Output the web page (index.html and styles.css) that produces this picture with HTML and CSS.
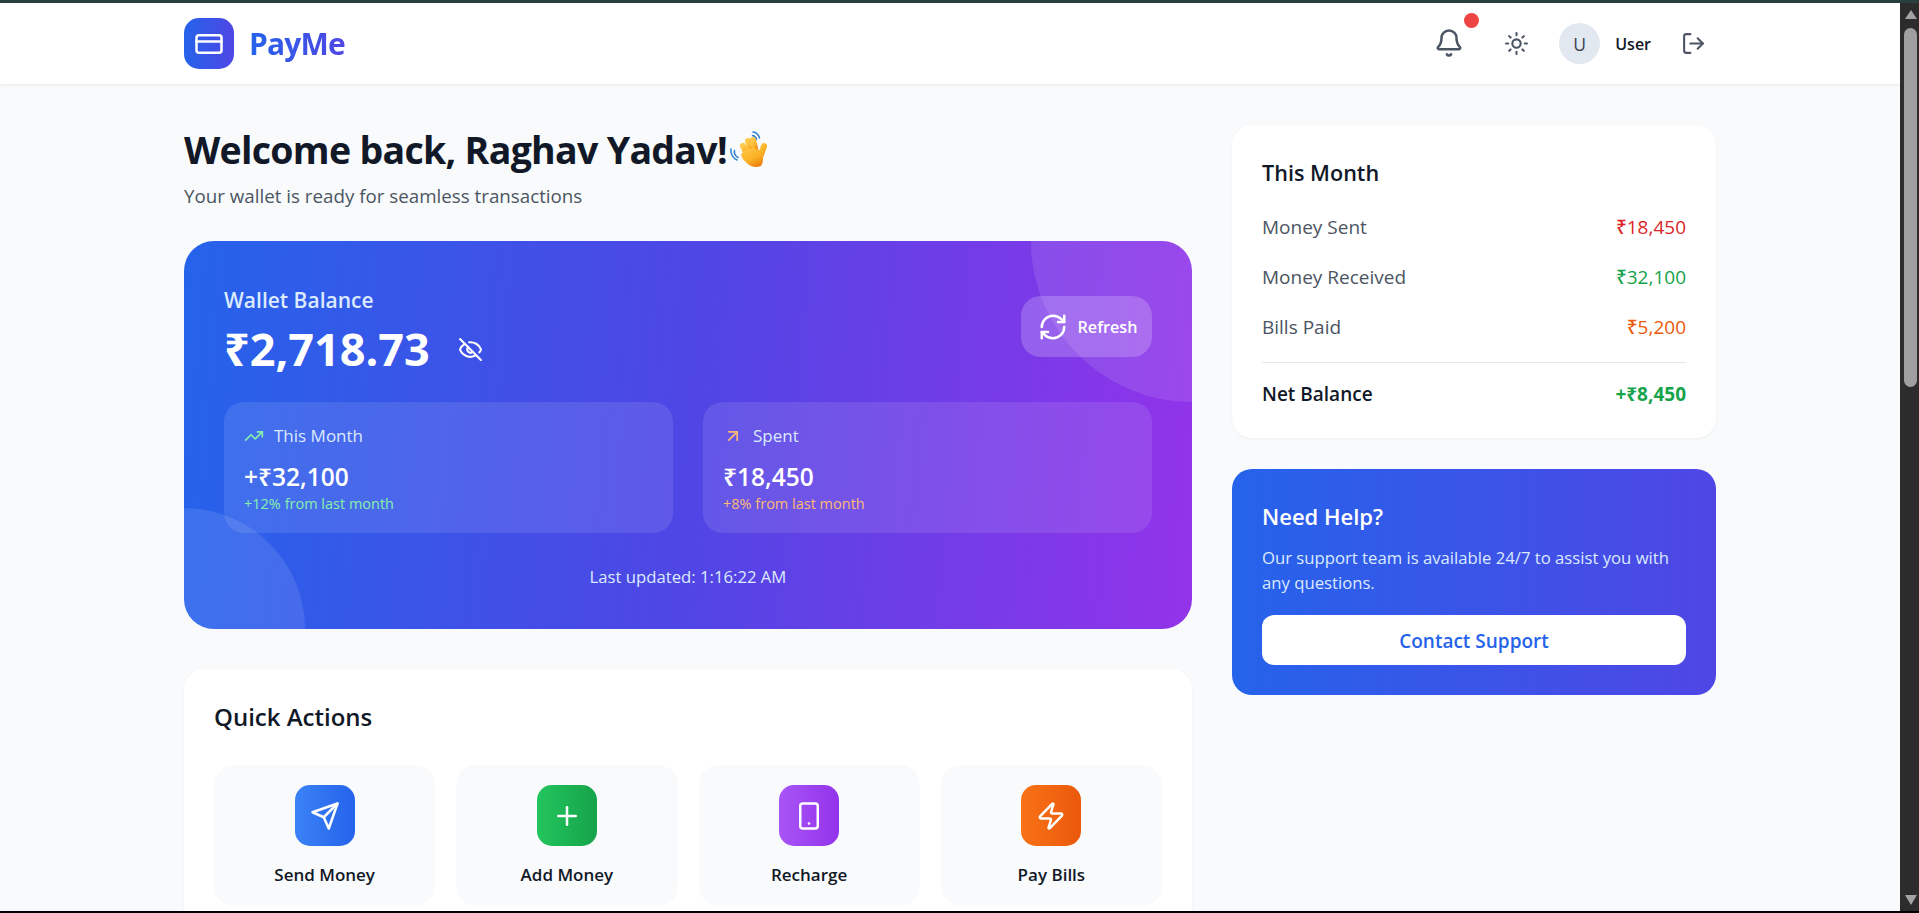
FILE: index.html
```html
<!DOCTYPE html>
<html lang="en">
<head>
  <meta charset="UTF-8" />
  <title>PayMe</title>
  <link rel="stylesheet" href="styles.css">
</head>
<body>
  <div class="top-edge"></div>
  <div class="frame">
    <div class="page">
      <header class="header">
        <div class="brand">
          <div class="brand-icon">
            <svg class="ico ico-30" viewBox="0 0 24 24"><rect x="2" y="5" width="20" height="14" rx="2"/><path d="M2 10h20"/></svg>
          </div>
          <span class="brand-name">PayMe</span>
        </div>
        <div class="header-tools">
          <button class="tool tool-bell">
            <svg class="ico ico-30" viewBox="0 0 24 24"><path d="M10.268 21a2 2 0 0 0 3.464 0"/><path d="M3.262 15.326A1 1 0 0 0 4 17h16a1 1 0 0 0 .74-1.673C19.41 13.956 18 12.499 18 8A6 6 0 0 0 6 8c0 4.499-1.411 5.956-2.738 7.326"/></svg>
            <span class="dot"></span>
          </button>
          <button class="tool">
            <svg class="ico ico-25" viewBox="0 0 24 24"><circle cx="12" cy="12" r="4"/><path d="M12 2v2M12 20v2M4.930 4.930l1.410 1.410M17.660 17.660l1.410 1.410M2 12h2M20 12h2M6.340 17.660l-1.410 1.410M19.070 4.930l-1.410 1.410"/></svg>
          </button>
          <div class="user">
            <span class="avatar">U</span>
            <span class="user-name">User</span>
          </div>
          <button class="tool">
            <svg class="ico ico-25" viewBox="0 0 24 24"><path d="M9 21H5a2 2 0 0 1-2-2V5a2 2 0 0 1 2-2h4"/><path d="M16 17l5-5-5-5"/><path d="M21 12H9"/></svg>
          </button>
        </div>
      </header>

      <main class="content">
        <section class="col-main">
          <h1 class="welcome">Welcome back, Raghav Yadav!
            <svg class="wave" viewBox="728 131 40 38">
              <defs>
                <linearGradient id="hand" x1="0" y1="0" x2="0.6" y2="1">
                  <stop offset="0" stop-color="#ffc94a"/>
                  <stop offset="0.65" stop-color="#fbb024"/>
                  <stop offset="1" stop-color="#ee8512"/>
                </linearGradient>
              </defs>
              <g fill="none" stroke="#2f7fd0" stroke-width="1.500" stroke-linecap="round">
                <path d="M752 132c3 .3 5.500 2.800 6.500 6"/>
                <path d="M751.500 135.500c2 .3 3.500 1.800 4 4"/>
                <path d="M730 149c-.8 4 1.500 9 6 11"/>
                <path d="M733.500 150.500c-.5 2.500 1 5.500 3.500 7"/>
              </g>
              <g stroke="url(#hand)" stroke-width="6" stroke-linecap="round">
                <path d="M747 156l-5-10"/>
                <path d="M751 153l-4-12"/>
                <path d="M755 153l-3-13"/>
                <path d="M758 160l5-14"/>
              </g>
              <path d="M740 155c2-5 12-9 18-5 5 4 5 12 2 16-4 2-10 1-13-2-3-3-6-5-7-9z" fill="url(#hand)"/>
            </svg>
          </h1>
          <p class="welcome-sub">Your wallet is ready for seamless transactions</p>

          <div class="balance-card">
            <span class="blob blob-top"></span>
            <span class="blob blob-bottom"></span>
            <div class="balance-head">
              <div>
                <div class="balance-label">Wallet Balance</div>
                <div class="balance-row">
                  <span class="balance-amount">₹2,718.73</span>
                  <svg class="ico ico-25 eye" viewBox="0 0 24 24"><path d="M10.733 5.076a10.744 10.744 0 0 1 11.205 6.575 1 1 0 0 1 0 .696 10.747 10.747 0 0 1-1.444 2.490"/><path d="M14.084 14.158a3 3 0 0 1-4.242-4.242"/><path d="M17.479 17.499a10.750 10.750 0 0 1-15.417-5.151 1 1 0 0 1 0-.696 10.750 10.750 0 0 1 4.446-5.143"/><path d="M2 2l20 20"/></svg>
                </div>
              </div>
              <button class="refresh">
                <svg class="ico ico-30" viewBox="0 0 24 24"><path d="M3 12a9 9 0 0 1 9-9 9.750 9.750 0 0 1 6.740 2.740L21 8"/><path d="M21 3v5h-5"/><path d="M21 12a9 9 0 0 1-9 9 9.750 9.750 0 0 1-6.740-2.740L3 16"/><path d="M8 16H3v5"/></svg>
                Refresh
              </button>
            </div>
            <div class="stat-grid">
              <div class="stat">
                <div class="stat-label">
                  <svg class="ico ico-20 green" viewBox="0 0 24 24"><path d="M22 7l-8.500 8.500-5-5L2 17"/><path d="M16 7h6v6"/></svg>
                  This Month
                </div>
                <div class="stat-value">+₹32,100</div>
                <div class="stat-note green">+12% from last month</div>
              </div>
              <div class="stat">
                <div class="stat-label">
                  <svg class="ico ico-20 peach" viewBox="0 0 24 24"><path d="M7 7h10v10"/><path d="M7 17L17 7"/></svg>
                  Spent
                </div>
                <div class="stat-value">₹18,450</div>
                <div class="stat-note peach">+8% from last month</div>
              </div>
            </div>
            <div class="updated">Last updated: 1:16:22 AM</div>
          </div>

          <div class="panel quick">
            <h2 class="panel-title">Quick Actions</h2>
            <div class="quick-grid">
              <div class="quick-tile">
                <div class="quick-icon bg-blue">
                  <svg class="ico ico-30" viewBox="0 0 24 24"><path d="M22 2l-7 20-4-9-9-4z"/><path d="M22 2L11 13"/></svg>
                </div>
                <span>Send Money</span>
              </div>
              <div class="quick-tile">
                <div class="quick-icon bg-green">
                  <svg class="ico ico-30" viewBox="0 0 24 24"><path d="M5 12h14"/><path d="M12 5v14"/></svg>
                </div>
                <span>Add Money</span>
              </div>
              <div class="quick-tile">
                <div class="quick-icon bg-purple">
                  <svg class="ico ico-30" viewBox="0 0 24 24"><rect x="5" y="2" width="14" height="20" rx="2"/><path d="M12 18h.01"/></svg>
                </div>
                <span>Recharge</span>
              </div>
              <div class="quick-tile">
                <div class="quick-icon bg-orange">
                  <svg class="ico ico-30" viewBox="0 0 24 24"><path d="M4 14a1 1 0 0 1-.78-1.630l9.900-10.200a.5.5 0 0 1 .86.46l-1.920 6.020A1 1 0 0 0 13 10h7a1 1 0 0 1 .78 1.630l-9.900 10.200a.5.5 0 0 1-.86-.46l1.920-6.020A1 1 0 0 0 11 14z"/></svg>
                </div>
                <span>Pay Bills</span>
              </div>
            </div>
          </div>
        </section>

        <aside class="col-side">
          <div class="panel summary">
            <h2 class="panel-title">This Month</h2>
            <div class="summary-row"><span>Money Sent</span><span class="val red">₹18,450</span></div>
            <div class="summary-row"><span>Money Received</span><span class="val grn">₹32,100</span></div>
            <div class="summary-row"><span>Bills Paid</span><span class="val org">₹5,200</span></div>
            <div class="summary-row summary-net"><span>Net Balance</span><span class="val grn">+₹8,450</span></div>
          </div>
          <div class="help">
            <h3 class="help-title">Need Help?</h3>
            <p class="help-text">Our support team is available 24/7 to assist you with any questions.</p>
            <button class="help-btn">Contact Support</button>
          </div>
        </aside>
      </main>
    </div>
    <div class="scrollbar">
      <span class="arrow arrow-up"></span>
      <span class="thumb"></span>
      <span class="arrow arrow-down"></span>
    </div>
  </div>
  <div class="bottom-edge"></div>
</body>
</html>
```

FILE: styles.css
```css
* {
  box-sizing: border-box;
}
html, body {
  margin: 0;
  height: 913px;
  overflow: hidden;
  font-family: "Open Sans", "Noto Sans", sans-serif;
  background: #f9fafb;
  color: #111827;
}
button {
  font-family: inherit;
  border: none;
  background: none;
  cursor: pointer;
}
h1, h2, h3, p {
  margin: 0;
}

.top-edge {
  height: 3px;
  background: #2a3f3d;
}
.bottom-edge {
  height: 2px;
  background: #000;
}
.frame {
  display: flex;
  height: 908px;
}
.page {
  flex: 1;
  min-width: 0;
  overflow: hidden;
}

/* fake browser scrollbar */
.scrollbar {
  width: 19px;
  background: #2c2c2c;
  display: flex;
  flex-direction: column;
  align-items: center;
  padding: 7px 0 6px 2px;
}
.arrow {
  width: 0;
  height: 0;
  border-left: 6.5px solid transparent;
  border-right: 6.5px solid transparent;
}
.arrow-up {
  border-bottom: 9px solid #a3a3a3;
}
.arrow-down {
  border-top: 10px solid #a3a3a3;
  margin-top: auto;
}
.thumb {
  width: 13px;
  height: 359px;
  margin-top: 9px;
  border-radius: 7px;
  background: #9f9f9f;
}

/* icons */
.ico {
  fill: none;
  stroke: currentColor;
  stroke-width: 2;
  stroke-linecap: round;
  stroke-linejoin: round;
  flex-shrink: 0;
}
.ico-30 { width: 30px; height: 30px; }
.ico-25 { width: 25px; height: 25px; }
.ico-20 { width: 20px; height: 20px; }

/* header */
.header {
  height: 81px;
  padding: 0 184px;
  background: #fff;
  box-shadow: 0 1px 3px rgba(0,0,0,0.07);
  display: flex;
  align-items: center;
  justify-content: space-between;
  position: relative;
}
.brand {
  display: flex;
  align-items: center;
  gap: 15px;
}
.brand-icon {
  width: 50px;
  height: 51px;
  border-radius: 15px;
  background: linear-gradient(90deg, #2563eb, #4f46e5);
  color: #fff;
  display: flex;
  align-items: center;
  justify-content: center;
}
.brand-name {
  font-size: 30px;
  font-weight: 700;
  letter-spacing: -0.8px;
  background: linear-gradient(90deg, #2563eb, #4f46e5);
  -webkit-background-clip: text;
  background-clip: text;
  color: transparent;
}
.header-tools {
  display: flex;
  align-items: center;
  gap: 20px;
}
.tool {
  padding: 10px;
  color: #4b5563;
  display: flex;
  position: relative;
}
.tool-bell {
  margin-top: -2px;
}
.dot {
  position: absolute;
  top: -5px;
  right: -5px;
  width: 15px;
  height: 15px;
  border-radius: 50%;
  background: #ef4444;
}
.user {
  display: flex;
  align-items: center;
  gap: 15px;
}
.avatar {
  width: 41px;
  height: 41px;
  border-radius: 50%;
  background: #e2e8f0;
  color: #374151;
  font-size: 17.5px;
  font-weight: 500;
  display: flex;
  align-items: center;
  justify-content: center;
}
.user-name {
  font-size: 16px;
  font-weight: 600;
}

/* main layout */
.content {
  padding: 41px 184px 0;
  display: grid;
  grid-template-columns: 1008px 484px;
  gap: 40px;
  align-items: start;
}
.welcome {
  font-size: 37.5px;
  line-height: 45px;
  font-weight: 700;
  letter-spacing: -0.7px;
  display: flex;
  gap: 2px;
  padding-top: 2px;
}
.wave {
  width: 40px;
  height: 38px;
  margin-top: 4px;
}
.welcome-sub {
  margin-top: 9px;
  font-size: 18.75px;
  line-height: 30px;
  color: #4b5563;
}

/* balance card */
.balance-card {
  margin-top: 30px;
  padding: 40px;
  height: 388px;
  border-radius: 30px;
  background: linear-gradient(95deg, #2563eb, #4f46e5 50%, #9333ea);
  color: #fff;
  position: relative;
  overflow: hidden;
}
.blob {
  position: absolute;
  border-radius: 50%;
  background: rgba(255,255,255,0.1);
}
.blob-top {
  width: 322px;
  height: 322px;
  top: -161px;
  right: -161px;
}
.blob-bottom {
  width: 242px;
  height: 242px;
  bottom: -121px;
  left: -121px;
}
.balance-head {
  display: flex;
  justify-content: space-between;
  align-items: flex-start;
  position: relative;
}
.balance-label {
  margin-top: 4px;
  font-size: 21px;
  line-height: 30px;
  font-weight: 600;
  color: #dbeafe;
}
.balance-row {
  display: flex;
  align-items: center;
  gap: 28px;
  margin-top: 4px;
}
.balance-amount {
  font-size: 45px;
  line-height: 60px;
  font-weight: 700;
}
.refresh {
  width: 131px;
  height: 61px;
  margin-top: 15px;
  border-radius: 20px;
  background: rgba(255,255,255,0.2);
  color: #fff;
  font-size: 16.2px;
  font-weight: 600;
  display: flex;
  align-items: center;
  justify-content: center;
  gap: 10px;
  padding-left: 8px;
}
.stat-grid {
  margin-top: 23px;
  display: grid;
  grid-template-columns: 1fr 1fr;
  gap: 30px;
  position: relative;
}
.stat {
  height: 131px;
  padding: 21px 20px 0;
  border-radius: 20px;
  background: rgba(255,255,255,0.1);
}
.stat-label {
  display: flex;
  align-items: center;
  gap: 10px;
  font-size: 17px;
  line-height: 26px;
  color: #dbeafe;
}
.stat-value {
  margin-top: 11px;
  font-size: 24.5px;
  line-height: 33px;
  font-weight: 600;
}
.stat-note {
  margin-top: 1px;
  font-size: 14.5px;
  line-height: 20px;
}
.green { color: #86efac; }
.peach { color: #fdba74; }
.updated {
  margin-top: 31px;
  text-align: center;
  font-size: 16.7px;
  line-height: 26px;
  color: #dbeafe;
  position: relative;
}

/* white panels */
.panel {
  background: #fff;
  border-radius: 20px;
  padding: 30px;
  box-shadow: 0 1px 3px rgba(0,0,0,0.05);
}
.panel-title {
  font-size: 24px;
  line-height: 36px;
  font-weight: 600;
}
.quick {
  margin-top: 40px;
}
.quick-grid {
  margin-top: 30px;
  display: grid;
  grid-template-columns: repeat(4, 1fr);
  gap: 21px;
}
.quick-tile {
  height: 141px;
  padding: 20px 20px 0;
  border-radius: 20px;
  background: #f9fafb;
  display: flex;
  flex-direction: column;
  align-items: center;
  font-size: 17px;
  font-weight: 600;
}
.quick-tile span {
  margin-top: 16px;
  line-height: 26px;
}
.quick-icon {
  width: 60px;
  height: 61px;
  flex-shrink: 0;
  border-radius: 15px;
  color: #fff;
  display: flex;
  align-items: center;
  justify-content: center;
}
.bg-blue { background: linear-gradient(90deg, #3b82f6, #2563eb); }
.bg-green { background: linear-gradient(90deg, #22c55e, #16a34a); }
.bg-purple { background: linear-gradient(90deg, #a855f7, #9333ea); }
.bg-orange { background: linear-gradient(90deg, #f97316, #ea580c); }

/* side column */
.summary {
  height: 313px;
}
.summary .panel-title {
  font-size: 21.6px;
  line-height: 30px;
  margin-top: 3px;
}
.summary-row {
  margin-top: 20px;
  display: flex;
  justify-content: space-between;
  font-size: 19px;
  line-height: 30px;
  color: #4b5563;
}
.summary .panel-title + .summary-row {
  margin-top: 24px;
}
.val {
  font-weight: 500;
}
.red { color: #dc2626; }
.grn { color: #16a34a; }
.org { color: #ea580c; }
.summary-net {
  margin-top: 20px;
  padding-top: 16px;
  border-top: 1px solid #e5e7eb;
  color: #111827;
  font-weight: 600;
}
.summary-net .val {
  font-weight: 700;
}
.help {
  margin-top: 31px;
  height: 226px;
  padding: 32px 30px 0;
  border-radius: 20px;
  background: linear-gradient(90deg, #2563eb, #4f46e5);
  color: #fff;
}
.help-title {
  font-size: 22px;
  line-height: 30px;
  font-weight: 600;
}
.help-text {
  margin-top: 14px;
  font-size: 16.7px;
  line-height: 25px;
  color: #dbeafe;
}
.help-btn {
  margin-top: 20px;
  width: 100%;
  height: 50px;
  padding-top: 3px;
  border-radius: 12px;
  background: #fff;
  color: #2563eb;
  font-size: 19px;
  font-weight: 600;
}
```
